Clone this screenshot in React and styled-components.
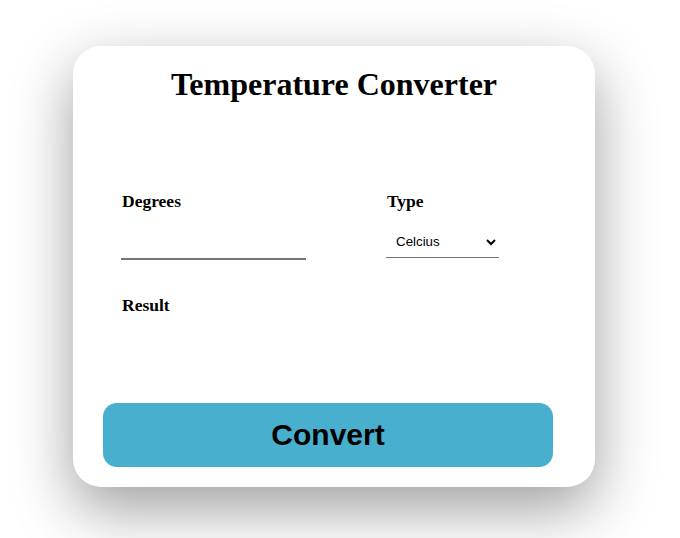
import React, { useState } from "react";
import styled, { createGlobalStyle } from "styled-components";

const GlobalStyle = createGlobalStyle`
  body {
    margin: 0;
    background: #fff;
    font-family: "Liberation Serif", "Times New Roman", serif;
  }
`;

const App = () => {
  const [degrees, setDegrees] = useState("");
  const [type, setType] = useState("celcius");

  return (
    <Page>
      <GlobalStyle />
      <Card>
        <Title>Temperature Converter</Title>
        <Fields>
          <Field>
            <Label>Degrees</Label>
            <DegreesInput
              value={degrees}
              onChange={(e) => setDegrees(e.target.value)}
            />
          </Field>
          <Field>
            <Label>Type</Label>
            <TypeSelect value={type} onChange={(e) => setType(e.target.value)}>
              <option value="celcius">Celcius</option>
              <option value="fahrenheit">Fahrenheit</option>
            </TypeSelect>
          </Field>
        </Fields>
        <ResultLabel>Result</ResultLabel>
        <ConvertButton>Convert</ConvertButton>
      </Card>
    </Page>
  );
};

const Page = styled.div`
  width: 680px;
  height: 538px;
  padding: 46px 0 0 73px;
  box-sizing: border-box;
  overflow: hidden;
`;

const Card = styled.div`
  width: 522px;
  height: 441px;
  box-sizing: border-box;
  padding: 0 42px 20px 30px;
  background: #fff;
  border-radius: 28px;
  box-shadow: 0 22px 60px rgba(0, 0, 0, 0.38);
  display: flex;
  flex-direction: column;
`;

const Title = styled.h1`
  margin: 20px 0 0 12px;
  font-size: 32px;
  line-height: 37px;
  font-weight: bold;
  text-align: center;
  color: #000;
`;

const Fields = styled.div`
  display: grid;
  grid-template-columns: 265px 1fr;
  padding-left: 19px;
  margin-top: 88px;
`;

const Field = styled.div`
  display: flex;
  flex-direction: column;
  align-items: flex-start;
`;

const Label = styled.span`
  font-size: 17.5px;
  line-height: 20px;
  font-weight: bold;
  color: #000;
`;

const DegreesInput = styled.input`
  margin: 20px 0 0 -1px;
  width: 185px;
  height: 29px;
  box-sizing: border-box;
  border: none;
  border-bottom: 2px solid #767676;
  padding: 0 2px;
  font-size: 14px;
  font-family: "Liberation Sans", Arial, sans-serif;
  background: transparent;
  &:focus {
    outline: none;
  }
`;

const TypeSelect = styled.select`
  margin: 16px 0 0 -1px;
  width: 113px;
  height: 31px;
  box-sizing: border-box;
  border: none;
  border-bottom: 1px solid #767676;
  padding: 0 6px 2px;
  font-size: 13.33px;
  font-family: "Liberation Sans", Arial, sans-serif;
  background: #fff;
  color: #000;
  &:focus {
    outline: none;
  }
`;

const ResultLabel = styled(Label)`
  margin: 35px 0 0 19px;
`;

const ConvertButton = styled.button`
  margin-top: auto;
  height: 64px;
  width: 450px;
  border: none;
  border-radius: 14px;
  background: #48afcf;
  color: #000;
  font-family: "Liberation Sans", Arial, sans-serif;
  font-size: 30px;
  font-weight: bold;
  cursor: pointer;
`;

export default App;
